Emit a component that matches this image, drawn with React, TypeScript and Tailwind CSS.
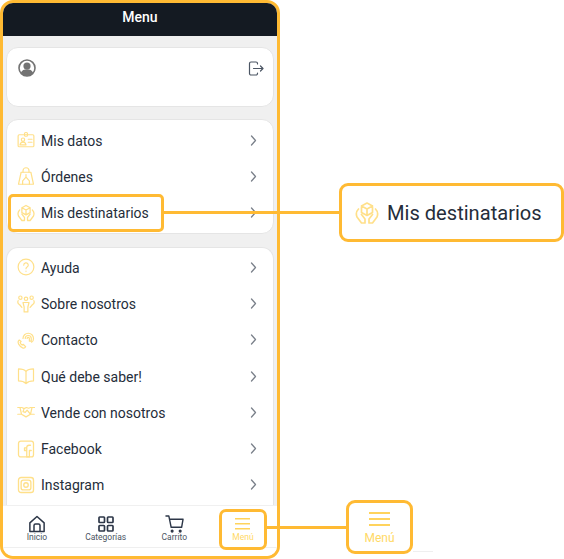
import React from "react";

const Y = "#ffe08a";

function Svg({ size = 18, stroke = Y, sw = 1.6, children }: { size?: number; stroke?: string; sw?: number; children: React.ReactNode }) {
  return (
    <svg width={size} height={size} viewBox="0 0 24 24" fill="none" stroke={stroke} strokeWidth={sw} strokeLinecap="round" strokeLinejoin="round">
      {children}
    </svg>
  );
}

const IdCard = () => (
  <Svg>
    <rect x="1.500" y="5" width="21" height="16" rx="1.500" />
    <rect x="10" y="2" width="4" height="5" rx="1.500" />
    <circle cx="8" cy="11.500" r="2.200" />
    <path d="M4 18.500c.5-2.800 2-3.800 4-3.800s3.500 1 4 3.800zM15 11h5M15 15h5" />
  </Svg>
);
const Bag = () => (
  <Svg>
    <path d="M8 7V5a4 4 0 0 1 8 0v2" />
    <path d="M5.500 7h13L22 23H2z" />
    <path d="M7.500 23v-4.500l4.500-5 4.500 5V23M12 13.500V10" />
  </Svg>
);
const HandsBoxPaths = () => (
  <>
    <path d="M12 2l5.500 3v6.500L12 14.500l-5.500-3V5zM6.500 5l5.500 3 5.500-3M12 8v6.500" />
    <path d="M3.500 8C1.500 10 1 13.500 2 16l4.500 6h3.500v-4l-3.500-4.500M20.500 8c2 2 2.500 5.500 1.500 8l-4.500 6H14v-4l3.500-4.500" />
  </>
);
const HandsBox = () => (
  <Svg sw={1.7}>
    <HandsBoxPaths />
  </Svg>
);
const Help = () => (
  <Svg>
    <circle cx="12" cy="12" r="10.500" />
    <path d="M9 9.500a3 3 0 1 1 4.500 2.500c-1 .6-1.500 1.200-1.500 2.300M12 17.500v.2" />
  </Svg>
);
const People = () => (
  <Svg>
    <circle cx="12" cy="5" r="2.300" />
    <circle cx="4.500" cy="3.500" r="2.200" />
    <circle cx="19.500" cy="3.500" r="2.200" />
    <path d="M8 10h8l-1.500 6v6.500h-5V16zM1.500 7.500c-1 2.500 0 4.500 2 5.500l3 3.500M22.500 7.500c1 2.500 0 4.500-2 5.500l-3 3.500" />
  </Svg>
);
const Phone = () => (
  <Svg>
    <path d="M3 12c-2 1.500-1.800 3.500-.8 5.500 1.300 2.300 3 4 5.300 5 1.800.6 3.300 0 4-1.500l-3-3.200-1.700 1c-1.200-.8-2-1.800-2.500-3.200l1.200-1.700z" />
    <path d="M8 10a7 7 0 0 1 14 0c0 2.500-.8 4.200-2.500 5M11 10a4 4 0 0 1 8 0v3.500h-2.500V10a1.500 1.500 0 0 0-3 0" />
  </Svg>
);
const Book = () => (
  <Svg>
    <path d="M12 6C9.500 3 6 2.500 2 2.500v16c4 0 7 .7 10 3.500 3-2.800 6-3.500 10-3.500v-16c-4 0-7.500.5-10 3.500zM12 6v16" />
  </Svg>
);
const Shake = () => (
  <Svg>
    <path d="M1 6h5.500l3 1.500 3-1.500 3 1 2.500-1h5.500M4 6l2 9 6 3.500 6-3.500 2-9M1 15h5M18 15h5M9.500 7.500l-1.500 4 3 1 2.500-3 4.500 5.500" />
  </Svg>
);
const Fb = () => (
  <Svg sw={1.7}>
    <rect x="2" y="1.500" width="20" height="21" rx="3" />
    <path d="M18 7h-2c-2 0-3 1.200-3 3v12.500h3.500V14H19M13 14h-3v-3.500h3" />
  </Svg>
);
const Ig = () => (
  <Svg sw={1.8}>
    <rect x="2" y="2" width="20" height="20" rx="3.500" />
    <rect x="5.500" y="5.500" width="13" height="13" rx="3" />
    <circle cx="12" cy="12" r="3" />
  </Svg>
);
const Chevron = () => (
  <svg width="7" height="11" viewBox="0 0 7 11" fill="none" stroke="#7a808a" strokeWidth="1.300" strokeLinecap="round" strokeLinejoin="round">
    <path d="M1.500 1 5.500 5.500l-4 4.500" />
  </svg>
);

function Row({ icon, label }: { icon: React.ReactNode; label: string }) {
  return (
    <div className="flex h-[36.25px] items-center pl-[10px] pr-[16px]">
      <span className="flex w-[24px] shrink-0 -translate-y-[1px] justify-start">{icon}</span>
      <span className="flex-1 text-[14px] text-[#252d3a]">{label}</span>
      <span className="flex -translate-y-[1px]"><Chevron /></span>
    </div>
  );
}

function NavItem({ icon, label, active }: { icon: React.ReactNode; label: string; active?: boolean }) {
  return (
    <div className={`flex w-[68px] flex-col items-center ${active ? "text-[#ffd966]" : "text-[#4b5563]"}`}>
      <span className="flex h-[22px] items-center">{icon}</span>
      <span className="-mt-[4px] text-[8.500px] leading-[12px]">{label}</span>
    </div>
  );
}

const Home = () => (
  <svg width="18" height="18" viewBox="0 0 24 24" fill="none" stroke="#2d3748" strokeWidth="2" strokeLinejoin="round">
    <path d="M2.500 10.500 12 2l9.500 8.500V22h-19z" />
    <path d="M8 22v-8a2 2 0 0 1 2-2h4a2 2 0 0 1 2 2v8" />
  </svg>
);
const Grid = () => (
  <svg width="16" height="16" viewBox="0 0 16 16" fill="none" stroke="#2d3748" strokeWidth="1.700">
    <rect x="1" y="1" width="5.500" height="5.500" rx="0.700" />
    <rect x="9.500" y="1" width="5.500" height="5.500" rx="0.700" />
    <rect x="1" y="9.500" width="5.500" height="5.500" rx="0.700" />
    <rect x="9.500" y="9.500" width="5.500" height="5.500" rx="0.700" />
  </svg>
);
const Cart = () => (
  <svg width="19" height="18" viewBox="0 0 20 19" fill="none" stroke="#2d3748" strokeWidth="1.500" strokeLinecap="round" strokeLinejoin="round">
    <path d="M1 1h3l2.500 12h11L19 4.500H5" />
    <circle cx="7.500" cy="17" r="0.900" fill="#2d3748" />
    <circle cx="16" cy="17" r="0.900" fill="#2d3748" />
  </svg>
);
const Burger = ({ w, gap, sw }: { w: number; gap: number; sw: number }) => (
  <svg width={w} height={gap * 2 + sw} viewBox={`0 0 ${w} ${gap * 2 + sw}`} stroke="#ffd35c" strokeWidth={sw}>
    <path d={`M0 ${sw / 2}H${w}M0 ${gap + sw / 2}H${w}M0 ${gap * 2 + sw / 2}H${w}`} />
  </svg>
);

export default function App() {
  return (
    <div className="relative h-[559px] w-[564px] overflow-hidden bg-white font-['Roboto',sans-serif]">
      <div className="relative flex h-[559px] w-[280px] flex-col overflow-hidden rounded-[13px] border-[3px] border-[#ffba33] bg-[#f0f0f0]">
        <div className="flex h-[33px] shrink-0 items-center justify-center bg-[#141a22] pb-[6px] pt-[1px] text-[14px] font-medium text-white">
          Menu
        </div>
        <div className="flex min-h-0 flex-1 flex-col gap-[12px] px-[3px] pt-[11px]">
          <div className="flex h-[60px] shrink-0 items-start justify-between rounded-[12px] border border-[#e5e5e5] bg-white pl-[11px] pr-[9px] pt-[11px]">
            <svg width="18" height="18" viewBox="0 0 18 18">
              <circle cx="9" cy="9" r="8" fill="#fff" stroke="#737373" strokeWidth="1.600" />
              <circle cx="9" cy="7" r="3.600" fill="#737373" />
              <path d="M2.800 14c1-3 3.500-3.800 6.200-3.800s5.200.8 6.200 3.800a8 8 0 0 1-12.400 0z" fill="#737373" />
            </svg>
            <svg className="mt-[2px]" width="16" height="16" viewBox="0 0 16 16" fill="none" stroke="#4b5563" strokeWidth="1.200" strokeLinecap="round" strokeLinejoin="round">
              <path d="M9.500 3V2.500a1.500 1.500 0 0 0-1.500-1.500H3a1.500 1.500 0 0 0-1.500 1.500v10A1.500 1.500 0 0 0 3 14h5a1.500 1.500 0 0 0 1.500-1.500V12M5.500 7.500H15M12.500 5 15 7.500 12.500 10" />
            </svg>
          </div>
          <div className="shrink-0 rounded-[12px] border border-[#e5e5e5] bg-white pb-[1px] pt-[3px]">
            <Row icon={<IdCard />} label="Mis datos" />
            <Row icon={<Bag />} label="Órdenes" />
            <Row icon={<HandsBox />} label="Mis destinatarios" />
          </div>
          <div className="mt-[1px] min-h-0 flex-1 rounded-t-[12px] border border-b-0 border-[#e5e5e5] bg-white pt-[2.500px]">
            <Row icon={<Help />} label="Ayuda" />
            <Row icon={<People />} label="Sobre nosotros" />
            <Row icon={<Phone />} label="Contacto" />
            <Row icon={<Book />} label="Qué debe saber!" />
            <Row icon={<Shake />} label="Vende con nosotros" />
            <Row icon={<Fb />} label="Facebook" />
            <Row icon={<Ig />} label="Instagram" />
          </div>
        </div>
        <div className="flex h-[51px] shrink-0 flex-col border-t border-[#f0f0f0] bg-white">
          <div className="flex h-[42px] shrink-0 items-start justify-between border-b border-[#efefef] pl-0 pt-[7px]">
            <NavItem icon={<Home />} label="Inicio" />
            <NavItem icon={<Grid />} label="Categorías" />
            <NavItem icon={<Cart />} label="Carrito" />
            <NavItem active icon={<Burger w={15} gap={5} sw={1.600} />} label="Menú" />
          </div>
        </div>
      </div>

      {/* Highlight boxes and connector lines laid over the screenshot */}
      <div className="absolute left-[8px] top-[194px] h-[38px] w-[156px] rounded-[5px] border-[3px] border-[#ffba33]" />
      <div className="absolute left-[163px] top-[211px] h-[3px] w-[178px] bg-[#ffba33]" />
      <div className="absolute left-[339px] top-[183px] flex h-[59px] w-[225px] items-center gap-[8px] rounded-[9px] border-[3px] border-[#ffba33] bg-white pl-[13px]">
        <Svg size={24} sw={1.700}>
          <HandsBoxPaths />
        </Svg>
        <span className="translate-y-[1px] text-[20.100px] text-[#252d3a]">Mis destinatarios</span>
      </div>
      <div className="absolute left-[219px] top-[509px] h-[41px] w-[48px] rounded-[7px] border-[3px] border-[#ffba33]" />
      <div className="absolute left-[266px] top-[526px] h-[3px] w-[82px] bg-[#ffba33]" />
      <div className="absolute left-[346px] top-[500px] flex h-[54px] w-[67px] flex-col items-center rounded-[9px] border-[3px] border-[#ffba33] bg-white pt-[9px] text-[#ffd966]">
        <Burger w={21} gap={6} sw={2} />
        <span className="mt-[5px] text-[12px] leading-[14px]">Menú</span>
      </div>
      <div className="absolute left-[413px] top-[551px] h-[1px] w-[20px] bg-[#efefef]" />
    </div>
  );
}
